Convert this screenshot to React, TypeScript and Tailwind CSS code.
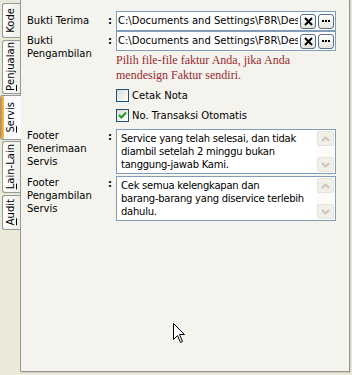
import React from "react";

const Tab = ({ label, box, selected }: { label: string; box: string; selected?: boolean }) => (
  <div className={box}>
    {selected && (
      <div className="absolute left-0 top-0 bottom-0 w-[3px] rounded-l-[3px] bg-linear-to-r from-[#E68B2C] to-[#FFC73C]" />
    )}
    <span className="[writing-mode:vertical-rl] rotate-180 leading-none pl-[1px]">
      {label === "Kode" ? (
        label
      ) : (
        <>
          <span className="underline">{label[0]}</span>
          {label.slice(1)}
        </>
      )}
    </span>
  </div>
);

const tabBase =
  "flex items-center justify-center border border-r-0 border-[#919B9C] rounded-l-[3px] bg-linear-to-r from-white to-[#EEEDE6] ml-[2px] w-[18px]";

const FileInput = () => (
  <div className="w-[220px] h-[20px] border border-[#7F9DB9] bg-white flex items-center pl-[1px] pr-[1px]">
    <div className="flex-1 overflow-hidden whitespace-nowrap leading-none">
      C:\Documents and Settings\F8R\Desktop
    </div>
    <div className="w-[16px] h-[15px] ml-[2px] rounded-[3px] border border-[#56708F] bg-linear-to-b from-white to-[#E6E5DC] flex items-center justify-center">
      <svg width="9" height="9" viewBox="0 0 9 9">
        <path d="M1 1 L8 8 M8 1 L1 8" stroke="#000" strokeWidth="2" />
      </svg>
    </div>
    <div className="w-[16px] h-[15px] ml-[2px] rounded-[3px] border border-[#56708F] bg-linear-to-b from-white to-[#E6E5DC] flex items-center justify-center gap-[1px]">
      <div className="w-[2px] h-[2px] bg-black" />
      <div className="w-[2px] h-[2px] bg-black" />
      <div className="w-[2px] h-[2px] bg-black" />
    </div>
  </div>
);

const Chevron = ({ up }: { up?: boolean }) => (
  <svg width="9" height="6" viewBox="0 0 9 6">
    <path d={up ? "M1 5 L4.5 1.5 L8 5" : "M1 1 L4.5 4.5 L8 1"} stroke="#C9C7BA" strokeWidth="2" fill="none" />
  </svg>
);

const Memo = ({ lines }: { lines: string[] }) => (
  <div className="w-[220px] h-[45px] border border-[#7F9DB9] bg-white flex">
    <div className="flex-1 pl-[4px] pt-[2px] leading-[13px] tracking-[-0.25px]">
      {lines.map((l) => (
        <div key={l}>{l}</div>
      ))}
    </div>
    <div className="w-[17px] mr-[1px] my-[1px] bg-[#FBFBF8] flex flex-col justify-between">
      <div className="h-[15px] rounded-[2px] border border-[#E6E4DA] bg-[#F0EFE8] flex items-center justify-center">
        <Chevron up />
      </div>
      <div className="h-[15px] rounded-[2px] border border-[#E6E4DA] bg-[#F0EFE8] flex items-center justify-center">
        <Chevron />
      </div>
    </div>
  </div>
);

const Check = ({ checked, label }: { checked?: boolean; label: string }) => (
  <div className="h-[20px] flex items-center">
    <div className="w-[13px] h-[13px] border border-[#1C5180] bg-linear-to-br from-[#DCDBD3] to-white flex items-center justify-center">
      {checked && (
        <svg width="9" height="9" viewBox="0 0 9 9">
          <path d="M1 4 L3.5 6.5 L8 1.5" stroke="#21A121" strokeWidth="2.2" fill="none" />
        </svg>
      )}
    </div>
    <span className="ml-[3px]">{label}</span>
  </div>
);

const App = () => {
  return (
    <div className="w-[352px] h-[375px] bg-[#ECE9D8] flex relative text-[10px] text-black font-['DejaVu_Sans',sans-serif]">
      <div className="w-[20px] flex flex-col">
        <Tab label="Kode" box={`${tabBase} mt-[3px] h-[35px]`} />
        <Tab label="Penjualan" box={`${tabBase} mt-[2px] h-[54px]`} />
        <Tab
          label="Servis"
          selected
          box="relative z-10 mt-[1px] h-[45px] w-[21px] flex items-center justify-center border border-r-0 border-[#919B9C] rounded-l-[3px] bg-[#FCFCFE]"
        />
        <Tab label="Lain-Lain" box={`${tabBase} mt-[1px] h-[52px]`} />
        <Tab label="Audit" box={`${tabBase} mt-[2px] h-[35px]`} />
      </div>

      <div className="w-[330px] h-[372px] bg-[#F4F3EE] border-l border-r border-b border-[#919B9C] shadow-[1px_1px_0_#D0CEBF] pt-[11px] pl-[6px]">
        <div className="flex h-[20px]">
          <div className="w-[81px] leading-[20px]">Bukti Terima</div>
          <div className="w-[8px] leading-[20px] font-bold">:</div>
          <FileInput />
        </div>
        <div className="flex h-[20px]">
          <div className="w-[81px] pt-[3px] leading-[13px]">
            Bukti
            <br />
            Pengambilan
          </div>
          <div className="w-[8px] leading-[20px] font-bold">:</div>
          <FileInput />
        </div>

        <div className="ml-[89px] mt-[2px] text-[12px] leading-[15px] text-[#9B2A2F] font-['Liberation_Serif',serif]">
          Pilih file-file faktur Anda, jika Anda
          <br />
          mendesign Faktur sendiri.
        </div>

        <div className="ml-[89px] mt-[2px]">
          <Check label="Cetak Nota" />
          <Check checked label="No. Transaksi Otomatis" />
        </div>

        <div className="flex mt-[4px]">
          <div className="w-[81px] leading-[13px]">
            Footer
            <br />
            Penerimaan
            <br />
            Servis
          </div>
          <div className="w-[8px] leading-[15px] font-bold">:</div>
          <Memo lines={["Service yang telah selesai, dan tidak", "diambil setelah 2 minggu bukan", "tanggung-jawab Kami."]} />
        </div>
        <div className="flex mt-[2px]">
          <div className="w-[81px] leading-[13px]">
            Footer
            <br />
            Pengambilan
            <br />
            Servis
          </div>
          <div className="w-[8px] leading-[15px] font-bold">:</div>
          <Memo lines={["Cek semua kelengkapan dan", "barang-barang yang diservice terlebih", "dahulu."]} />
        </div>
      </div>

      <svg className="absolute left-[173px] top-[323px]" width="13" height="21" viewBox="0 0 13 21">
        <path
          d="M0.5 0.5 L0.5 16.5 L4.5 12.5 L7.5 19.5 L9.5 18.5 L6.5 11.5 L11.5 11.5 Z"
          fill="#fff"
          stroke="#000"
          strokeWidth="1"
        />
      </svg>
    </div>
  );
};

export default App;
